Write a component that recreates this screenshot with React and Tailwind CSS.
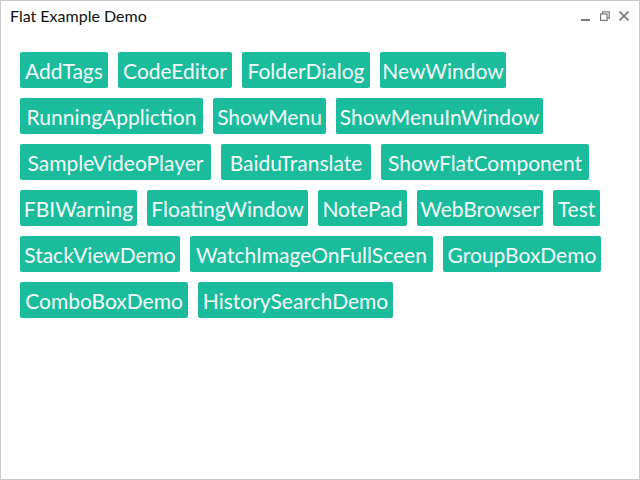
const rows = [
  [['AddTags', 88], ['CodeEditor', 114], ['FolderDialog', 128], ['NewWindow', 126]],
  [['RunningAppliction', 183], ['ShowMenu', 113], ['ShowMenuInWindow', 207]],
  [['SampleVideoPlayer', 191], ['BaiduTranslate', 150], ['ShowFlatComponent', 208]],
  [['FBIWarning', 117], ['FloatingWindow', 161], ['NotePad', 89], ['WebBrowser', 126], ['Test', 47]],
  [['StackViewDemo', 160], ['WatchImageOnFullSceen', 243], ['GroupBoxDemo', 158]],
  [['ComboBoxDemo', 168], ['HistorySearchDemo', 195]],
]

function FlatButton({ label, width }) {
  return (
    <button
      className="h-[36px] shrink-0 rounded-[2px] bg-[#1abc9c] text-[#f4fbf9] text-[21px] leading-none whitespace-nowrap overflow-hidden flex items-center justify-center"
      style={{ width }}
    >
      {label}
    </button>
  )
}

export default function App() {
  return (
    <div
      className="w-[640px] h-[480px] bg-white border border-[#c8c8c8] flex flex-col"
      style={{ fontFamily: 'Lato, "Noto Sans", sans-serif' }}
    >
      {/* title bar */}
      <div className="h-[32px] shrink-0 flex items-center justify-between pl-[9px] pr-[10px]">
        <span className="text-[16px] text-[#111] -mt-[2px]">Flat Example Demo</span>
        <div className="flex items-center gap-[9px] text-[#7a7a7a] -mt-[2px]">
          <svg width="10" height="10" viewBox="0 0 10 10">
            <rect x="0" y="8" width="9" height="2" fill="currentColor" />
          </svg>
          <svg width="10" height="10" viewBox="0 0 10 10" fill="none" stroke="currentColor" strokeWidth="1.2">
            <rect x="0.6" y="3" width="6.4" height="6.4" />
            <path d="M2.6 3V0.8h6.6v6.4H7" />
          </svg>
          <svg width="10" height="10" viewBox="0 0 10 10" stroke="currentColor" strokeWidth="1.8">
            <path d="M0.5 0.5L9.5 9.5M9.5 0.5L0.5 9.5" />
          </svg>
        </div>
      </div>

      {/* buttons */}
      <div className="pt-[19px] pl-[19px] flex flex-col gap-[10px]">
        {rows.map((row, i) => (
          <div key={i} className="flex gap-[10px]">
            {row.map(([label, w]) => (
              <FlatButton key={label} label={label} width={w} />
            ))}
          </div>
        ))}
      </div>
    </div>
  )
}
